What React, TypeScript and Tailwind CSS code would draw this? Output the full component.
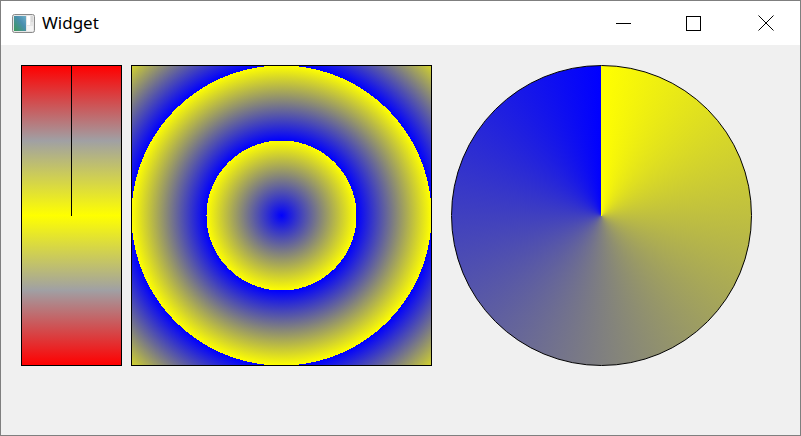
import React from "react";

function AppIcon() {
  return (
    <svg width="23" height="19" viewBox="0 0 23 19">
      <defs>
        <linearGradient id="ico" x1="0" y1="1" x2="1" y2="0">
          <stop offset="0" stopColor="#3c9a5a" />
          <stop offset="0.6" stopColor="#4a8fb0" />
          <stop offset="1" stopColor="#6fb0c8" />
        </linearGradient>
      </defs>
      <rect x="0.5" y="0.5" width="22" height="18" rx="2" fill="#e6e6e6" stroke="#8a8a8a" />
      <rect x="2" y="2" width="12" height="15" fill="url(#ico)" />
      <rect x="15" y="2" width="3" height="9" fill="#ffffff" />
      <rect x="19" y="2" width="2" height="6" fill="#d8d8d8" />
      <rect x="15" y="12" width="6" height="5" fill="#f4f4f4" />
    </svg>
  );
}

function TitleBar() {
  return (
    <div className="flex h-[44px] items-center bg-white">
      <div className="ml-[11px] mt-[1px] flex items-center">
        <AppIcon />
      </div>
      <span
        className="ml-[7px] text-[17px] text-black"
        style={{ fontFamily: '"Noto Sans", "Open Sans", sans-serif' }}
      >
        Widget
      </span>
      <div className="flex-1" />
      {/* Caption buttons */}
      <div className="flex h-full">
        <div className="flex w-[70px] items-center justify-center">
          <svg width="15" height="15" viewBox="0 0 15 15">
            <line x1="0" y1="7.5" x2="15" y2="7.5" stroke="#000" strokeWidth="1" />
          </svg>
        </div>
        <div className="flex w-[71px] items-center justify-center">
          <svg width="15" height="15" viewBox="0 0 15 15">
            <rect x="0.5" y="0.5" width="14" height="14" fill="none" stroke="#000" strokeWidth="1" />
          </svg>
        </div>
        <div className="flex w-[71px] items-center justify-center pl-[3px]">
          <svg width="16" height="16" viewBox="0 0 16 16">
            <line x1="0.5" y1="0.5" x2="15.5" y2="15.5" stroke="#000" strokeWidth="1" />
            <line x1="15.5" y1="0.5" x2="0.5" y2="15.5" stroke="#000" strokeWidth="1" />
          </svg>
        </div>
      </div>
    </div>
  );
}

export default function App() {
  return (
    <div className="flex h-[436px] w-[801px] flex-col border border-[#7f7f7f] bg-[#f0f0f0]">
      <TitleBar />

      <div className="flex flex-1 items-start pl-[20px] pt-[20px]">
        {/* Linear gradient strip */}
        <div className="relative h-[301px] w-[101px] border border-black bg-[linear-gradient(to_bottom,#ff0000_0%,#a0a0a4_25%,#ffff00_50%,#a0a0a4_75%,#ff0000_100%)]">
          <div className="absolute left-[49px] top-0 h-[150px] w-px bg-black" />
        </div>

        {/* Radial gradient square */}
        <div className="ml-[9px] h-[301px] w-[301px] border border-black bg-[repeating-radial-gradient(circle_at_center,#0000ff_0px,#ffff00_75px)]" />

        {/* Conical gradient circle */}
        <div className="ml-[19px] h-[301px] w-[301px] rounded-full border border-black bg-[conic-gradient(#ffff00,#0000ff)]" />
      </div>
    </div>
  );
}
